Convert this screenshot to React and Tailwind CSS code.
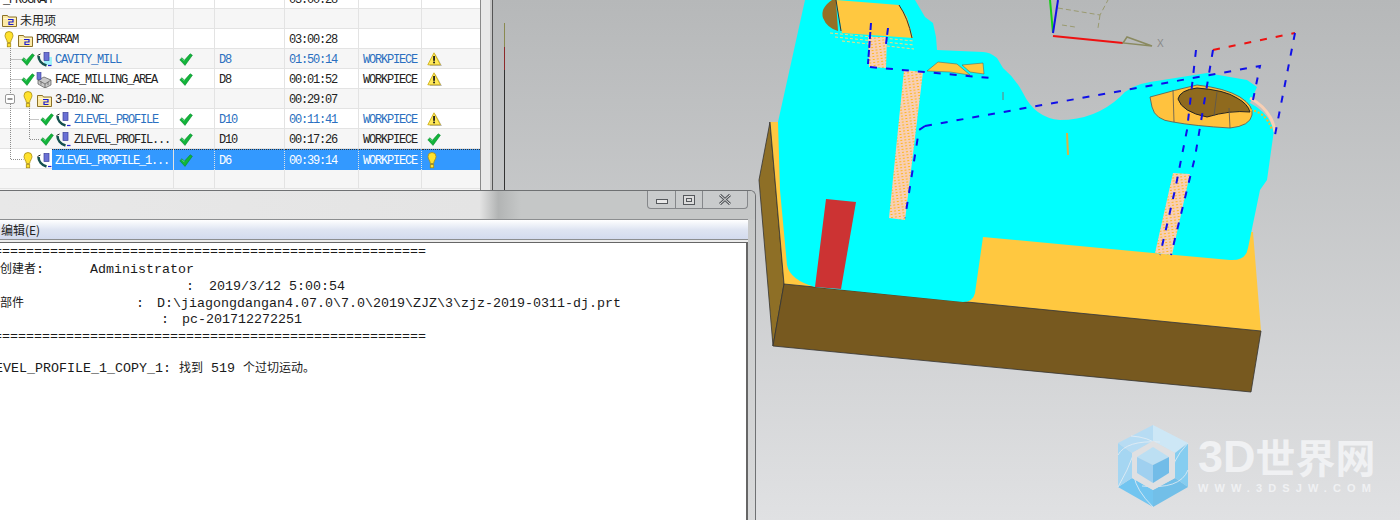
import React from 'react';

const rows = [
  { name: '_PROGRAM', level: 'pl-0', icons: [], time: '03:00:28', shade: 'bg-white' },
  { name: '未用项', level: 'pl-px', icons: ['folder'], shade: 'bg-[#f6f6f6]', cjk: true },
  { name: 'PROGRAM', level: 'pl-px', icons: ['bulb', 'folder'], time: '03:00:28', shade: 'bg-white' },
  { name: 'CAVITY_MILL', level: 'pl-5', icons: ['check', 'toolCyan'], ok: true, tool: 'D8', time: '01:50:14', geom: 'WORKPIECE', status: 'warn', blue: true, shade: 'bg-[#f6f6f6]' },
  { name: 'FACE_MILLING_AREA', level: 'pl-5', icons: ['check', 'mill'], ok: true, tool: 'D8', time: '00:01:52', geom: 'WORKPIECE', status: 'warn', shade: 'bg-white' },
  { name: '3-D10.NC', level: 'pl-5', icons: ['bulb', 'folder'], time: '00:29:07', shade: 'bg-[#f6f6f6]' },
  { name: 'ZLEVEL_PROFILE', level: 'pl-[39px]', icons: ['check', 'tool'], ok: true, tool: 'D10', time: '00:11:41', geom: 'WORKPIECE', status: 'warn', blue: true, shade: 'bg-white' },
  { name: 'ZLEVEL_PROFIL...', level: 'pl-[39px]', icons: ['check', 'tool'], ok: true, tool: 'D10', time: '00:17:26', geom: 'WORKPIECE', status: 'check', shade: 'bg-[#f6f6f6]' },
  { name: 'ZLEVEL_PROFILE_1...', level: 'pl-5', icons: ['bulb', 'tool'], ok: true, tool: 'D6', time: '00:39:14', geom: 'WORKPIECE', status: 'bulb', selected: true, shade: 'bg-white' },
  { name: '', level: 'pl-0', icons: [], shade: 'bg-[#f6f6f6]' },
];

const Bulb = () => (
  <svg width="10" height="17" viewBox="0 0 10 17">
    <path d="M1 4.5a4 4 0 0 1 8 0c0 2.5-2 4-2.4 7H3.4C3 8.500 1 7 1 4.500z" fill="#ffe22e" stroke="#a88c10" strokeWidth="0.8" />
    <rect x="3.300" y="12.600" width="3.400" height="3.200" fill="#ffe22e" stroke="#a88c10" strokeWidth="0.8" />
  </svg>
);

const Folder = () => (
  <svg width="15" height="14" viewBox="0 0 15 14">
    <path d="M0.500 2.500h5l1 1.500h8v9.500h-14z" fill="#fdeaa6" stroke="#8b7128" />
    <rect x="1.500" y="5" width="12" height="1" fill="#fff8d8" />
    <path d="M6 6.500h5v2.500H7v2.500h4.500" fill="none" stroke="#1a1ad0" strokeWidth="1.200" />
  </svg>
);

const Check = () => (
  <svg width="14" height="13" viewBox="0 0 14 13">
    <path d="M0.800 6.800L3 4.700l2.400 2.600L11.200 0.800l2.200 1.400-7.400 10.200z" fill="#12b53a" stroke="#0c8a30" strokeWidth="0.600" />
    <path d="M3 5.600l2.400 2.500" stroke="#8ce8a0" strokeWidth="0.700" />
  </svg>
);

const Tool = ({ cyan }) => (
  <svg width="15" height="15" viewBox="0 0 15 15">
    {cyan && <rect x="7" y="5" width="8" height="8" fill="#9ff2fa" />}
    <path d="M1.500 4c0 4 3 8 8 9.500" fill="none" stroke="#14504e" strokeWidth="2.600" />
    <path d="M0.500 3.500l3-1.500" stroke="#222" strokeWidth="1" />
    <rect x="7" y="0.500" width="5" height="8" fill="#6a70d4" stroke="#3a3f9a" strokeWidth="0.700" />
    <path d="M11 13.500h3.500" stroke="#2424d0" strokeWidth="1.200" />
  </svg>
);

const Mill = () => (
  <svg width="16" height="16" viewBox="0 0 16 16">
    <path d="M2 8l6-3 7 3v5l-6 3-7-4z" fill="#c8c8c8" stroke="#555" strokeWidth="0.700" />
    <path d="M2 8l7 4 6-4M9 12v4M5 9.500l0 3M12 10v3" fill="none" stroke="#555" strokeWidth="0.700" />
    <rect x="1" y="0.500" width="4" height="7" fill="#6a70d4" stroke="#3a3f9a" strokeWidth="0.600" />
  </svg>
);

const Warn = () => (
  <svg width="16" height="15" viewBox="0 0 16 15">
    <path d="M8.500 2l6.500 12H2.500z" fill="#bbb" />
    <path d="M7 0.800l6.400 12H0.800z" fill="#ffe95a" stroke="#c9a90a" strokeWidth="0.800" />
    <rect x="6.200" y="4" width="1.700" height="4.800" fill="#111" />
    <rect x="6.200" y="9.600" width="1.700" height="1.700" fill="#111" />
  </svg>
);

const icons = {
  bulb: <Bulb />,
  folder: <Folder />,
  check: <Check />,
  tool: <Tool />,
  toolCyan: <Tool cyan />,
  mill: <Mill />,
  warn: <Warn />,
};

const Row = ({ row }) => {
  const tone = row.selected ? 'text-white' : row.blue ? 'text-[#2a6fc0]' : 'text-[#222]';
  const cell = `h-full flex items-center border-r border-[#e3e3e3] ${row.selected ? 'bg-[#3399ff] border-t border-t-[#333] border-dotted' : ''}`;
  return (
    <div className={`grid grid-cols-[174px_41px_70px_74px_63px_58px] h-5 border-b border-[#e3e3e3] ${row.shade} ${tone}`}>
      <div className={`h-full flex items-center border-r border-[#e3e3e3] ${row.level}`}>
        {row.icons.map((ic, i) => (
          <span key={i} className="w-4 h-full pt-px flex items-center justify-center shrink-0">{icons[ic]}</span>
        ))}
        <span className={`flex-1 h-full flex items-center pt-[2px] pl-[3px] ${row.selected ? 'bg-[#3399ff] border-t border-[#333] border-dotted' : ''} ${row.cjk ? "text-[12px] tracking-normal [font-family:'Noto_Sans_CJK_SC',sans-serif]" : ''}`}>
          {row.name}
        </span>
      </div>
      <div className={`${cell} pt-px pl-[5px]`}>{row.ok && <Check />}</div>
      <div className={`${cell} pt-[2px] pl-1`}>{row.tool}</div>
      <div className={`${cell} pt-[2px] pl-1`}>{row.time}</div>
      <div className={`${cell} pt-[2px] pl-1`}>{row.geom}</div>
      <div className={`${cell} pt-px pl-[5px] border-r-0`}>{row.status && (row.status === 'check' ? <Check /> : icons[row.status])}</div>
    </div>
  );
};

const Model = () => (
  <svg className="absolute left-0 top-0" width="1400" height="520" viewBox="0 0 1400 520">
    <defs>
      <pattern id="hatch" width="4" height="3" patternUnits="userSpaceOnUse" patternTransform="rotate(-8)">
        <rect width="4" height="3" fill="#f8cfb4" />
        <rect width="2" height="1" fill="#ffb820" />
      </pattern>
    </defs>
    <path d="M504.500 23v24" stroke="#8a8a50" />
    <path d="M504.500 47v23" stroke="#8c2a2a" />
    <path d="M504.500 70v120" stroke="#333" />

    <polygon points="770,122 759,180 773,346 784,284" fill="#8e6f26" stroke="#333" strokeWidth="0.800" />
    <polygon points="770,122 782,122 800,230 1253,232 1261,331 784,284" fill="#ffc840" />
    <polygon points="784,284 1261,331 1251,392 773,346" fill="#77591f" stroke="#333" strokeWidth="0.800" />
    <path d="M770 122L784 284" stroke="#333" strokeWidth="0.800" />

    <path
      d="M805 0L778 122L780 190L787 265Q790 280 815 287L963 302Q973 302 975 293L983 237L1153 253L1230 260Q1246 261 1248 248L1260 190L1267 180L1274 130Q1268 112 1250 103L1257 87L1247 80L1207 73L1150 82Q1130 85 1120 97Q1095 120 1060 120Q1035 118 1023 93Q1015 78 1003 68L997 58Q990 52 983 52L937 50L936 37L933 23L925 17L915 0Z"
      fill="#00ffff"
    />

    <polygon points="826,199 856,202 841,289 815,287" fill="#cc3333" />

    <path d="M832 0Q820 8 823 18Q827 28 838 31L836 0Z" fill="#957026" />
    <path d="M836 0L899 5L907 17L913 38L842 33Z" fill="#ffc840" />
    <path d="M836 0L841 31M899 5Q908 18 912 38" fill="none" stroke="#333" strokeWidth="1" />
    <path d="M830 33L914 41M835 37L914 45M842 41L914 49" stroke="#ffd878" strokeDasharray="3 2" />

    <path d="M927 71L938 62L957 64L970 75L950 72Z" fill="#ffc840" stroke="#555" strokeWidth="0.500" />
    <path d="M962 65L983 63L984 74L970 72Z" fill="#ffc840" stroke="#555" strokeWidth="0.500" />

    <polygon points="868,37 887,37 886,68 869,67" fill="url(#hatch)" />
    <polygon points="904,70 923,72 905,220 889,218" fill="url(#hatch)" />
    <polygon points="1173,173 1190,174 1172,255 1155,253" fill="url(#hatch)" />

    <path d="M1150 97Q1175 90 1197 85Q1225 88 1240 97Q1254 106 1252 115Q1250 126 1230 128Q1195 126 1173 122Q1155 120 1152 107Z" fill="#ffc23e" stroke="#555" strokeWidth="0.800" />
    <path d="M1178 99Q1180 90 1197 88Q1225 90 1237 98Q1248 104 1250 112Q1230 110 1207 117Q1182 112 1178 99Z" fill="#8f6a1e" stroke="#222" strokeWidth="1" />
    <path d="M1173 90L1174 122M1230 128L1229 108M1214 116L1217 92" fill="none" stroke="#555" strokeWidth="0.800" />
    <path d="M1250 98Q1272 110 1275 132" fill="none" stroke="#f8cfb4" strokeWidth="3" />
    <path d="M1250 110Q1266 112 1272 130" fill="none" stroke="#ffb820" strokeWidth="2" strokeDasharray="2 2" />

    <g fill="none" strokeWidth="2" strokeDasharray="7 9">
      <path d="M1213 50L1295 33" stroke="#ee1111" />
      <path d="M1295 33L1275 135M1196 50L1187 130L1175 190L1160 255M1213 50L1195 157L1171 255" stroke="#1010e8" />
      <path d="M925 126L1260 66L1253 100M925 126L919 130L905 218" stroke="#1010e8" />
      <path d="M870 67L990 78" stroke="#1010e8" />
      <path d="M871 23L868 64M888 28L886 44" stroke="#1010e8" strokeDasharray="7 2" />
    </g>

    <path d="M1067 133L1068 155" stroke="#e0b040" strokeWidth="2" />
    <path d="M1003 92L1003 100" stroke="#777" />

    <path d="M1050 0L1053 33" stroke="#18d018" strokeWidth="2" />
    <path d="M1058 0L1053 33" stroke="#1010e8" strokeWidth="2" />
    <path d="M1053 36L1123 43" stroke="#ee1111" strokeWidth="2" />
    <path d="M1123 43L1127 37L1152 46Z" fill="none" stroke="#8a8a60" strokeWidth="1.500" />
    <path d="M1058 8L1100 15L1108 0M1100 15L1098 28M1062 25L1075 27" fill="none" stroke="#9a9a70" strokeDasharray="5 3" />
    <text x="1157" y="47" className="text-[10px] [font-family:'Liberation_Sans',sans-serif]" fill="#888">X</text>
  </svg>
);

const Logo = () => (
  <div className="absolute left-[1117px] top-[424px] flex items-start gap-[9px]">
    <svg width="72" height="84" viewBox="1117 424 72 84">
      <polygon points="1153,425 1188,443 1175,453 1153,441" fill="#cde7f6" />
      <polygon points="1188,443 1188,487 1175,478 1175,453" fill="#85cdf0" />
      <polygon points="1188,487 1153,507 1153,490 1175,478" fill="#72bfe8" />
      <polygon points="1153,507 1118,487 1132,478 1153,490" fill="#72c5f0" />
      <polygon points="1118,487 1118,443 1132,453 1132,478" fill="#a5d6f2" />
      <polygon points="1118,443 1153,425 1153,441 1132,453" fill="#b7dcf3" />
      <path d="M1131 436Q1165 438 1172 468M1188 443Q1170 462 1172 478M1188 470Q1180 490 1142 486M1153 507Q1136 490 1134 476M1118 487Q1128 470 1134 453M1118 455Q1126 440 1160 442" fill="none" stroke="#e6eef4" strokeWidth="0.800" />
      <polygon points="1153,441 1175,453 1175,478 1153,490 1132,478 1132,453" fill="#dfe0e2" />
      <polygon points="1153,447 1169,457 1153,465 1137,457" fill="#bcdff3" />
      <polygon points="1137,457 1153,465 1153,483 1137,473" fill="#9fd0f0" />
      <polygon points="1169,457 1153,465 1153,483 1169,473" fill="#72bce8" />
    </svg>
    <div className="flex flex-col pt-[5px] text-[#f0f1f3]">
      <div className="flex items-center h-[54px] font-bold leading-none">
        <span className="text-[45px] [font-family:'Liberation_Sans',sans-serif]">3D</span>
        <span className="text-[40px] [font-family:'Noto_Sans_CJK_SC',sans-serif]">世界网</span>
      </div>
      <div className="text-[11px] leading-none font-bold tracking-[6.100px] [font-family:'Liberation_Sans',sans-serif]">WWW.3DSJW.COM</div>
    </div>
  </div>
);

const cjk = "text-[12px] leading-none [font-family:'Noto_Sans_CJK_SC',sans-serif]";
const line = 'h-[16.700px]';
const rule = '======================================================';

const Dialog = () => (
  <div className="absolute left-0 top-[190px] w-[756px] h-[330px] flex flex-col border-t border-r border-[#6f7173] rounded-tr-[6px] bg-gradient-to-b from-[#c5c7c7] to-[#d9dadb] pr-[7px] overflow-hidden">
    <div className="h-[28px] shrink-0 flex justify-end items-start -mr-[7px] pr-[7px] bg-[linear-gradient(90deg,#e8e8e8_0%,#e4e4e4_63.500%,#b2b4b4_66%,#bcbebe_67.500%,#c5c7c7_69%,#c5c7c7_100%)]">
      <div className="flex h-[18px] w-[101px] border-x border-b border-[#85878a] rounded-b-[4px] bg-[#c9cbcc]">
        <div className="w-[28px] border-r border-[#85878a] flex items-center justify-center">
          <div className="w-[12px] h-[5px] mt-[4px] border border-[#55585c] bg-[#e8e8e8]" />
        </div>
        <div className="w-[27px] border-r border-[#85878a] flex items-center justify-center">
          <div className="w-[12px] h-[10px] border border-[#55585c] flex items-center justify-center bg-[#dcdcdc]">
            <div className="w-[6px] h-[4px] border border-[#55585c]" />
          </div>
        </div>
        <div className="flex-1 flex items-center justify-center">
          <svg width="14" height="11" viewBox="0 0 14 11">
            <path d="M2 1l10 9M12 1L2 10" stroke="#55585c" strokeWidth="3" />
            <path d="M2 1l10 9M12 1L2 10" stroke="#e4e4e4" strokeWidth="1" />
          </svg>
        </div>
      </div>
    </div>
    <div className="h-[21px] shrink-0 border-t border-[#8c8e90] border-b bg-gradient-to-b from-white via-[#dfe5f2] to-[#d3dbee] flex items-center pl-px text-[12px] text-[#222] [font-family:'Noto_Sans_CJK_SC',sans-serif]">
      编辑(E)
    </div>
    <div className="h-[2px] shrink-0 bg-[#ececec]" />
    <div className="flex-1 bg-white border-t border-r-2 border-[#666] overflow-hidden pt-[1px] text-[13.330px] leading-[16.700px] text-[#1a1a1a] whitespace-pre [font-family:'Liberation_Mono',monospace]">
      <div className="h-[18.200px] -ml-[6px]">{rule}</div>
      <div className={line}><span className={cjk}>创建者</span>:<span className="ml-[46px]">Administrator</span></div>
      <div className={`${line} ml-[186px]`}>:<span className="ml-[15px]">2019/3/12 5:00:54</span></div>
      <div className={line}><span className={cjk}>部件</span><span className="ml-[112px]">:</span><span className="ml-[13px]">D:\jiagongdangan4.07.0\7.0\2019\ZJZ\3\zjz-2019-0311-dj.prt</span></div>
      <div className={`${line} ml-[161px]`}>:<span className="ml-[13px]">pc-201712272251</span></div>
      <div className={`${line} -ml-[6px]`}>{rule}</div>
      <div className="h-[15.200px]">&nbsp;</div>
      <div className={`${line} -ml-[21px]`}>ZLEVEL_PROFILE_1_COPY_1: <span className={cjk}>找到</span> 519 <span className={cjk}>个过切运动。</span></div>
    </div>
  </div>
);

const App = () => (
  <div className="relative w-[1400px] h-[520px] overflow-hidden bg-gradient-to-b from-[#b6b8b9] to-[#e0e1e3]">
    <Model />
    <Logo />
    <div className="relative w-[493px] h-[190px] flex border-r border-[#555]">
      <div className="relative w-[481px] h-full overflow-hidden bg-[#f6f6f6] border-r border-[#8a8a8a] text-[12px] tracking-[-1.200px] [font-family:'Liberation_Mono',monospace]">
        <div className="-mt-[11px]">
          {rows.map((row, i) => <Row key={i} row={row} />)}
        </div>
        <svg className="absolute left-0 top-0" width="60" height="170" viewBox="0 0 60 170">
          <g fill="none" stroke="#8c8c8c" strokeDasharray="1 1">
            <path d="M10.500 48v111.500h13M10.500 59.500h11M10.500 79.500h11M29.500 108v31.500h10M29.500 119.500h10" />
          </g>
          <rect x="5.500" y="94.500" width="9" height="9" rx="1.500" fill="#fff" stroke="#999" />
          <path d="M7.500 99h5" stroke="#333" />
        </svg>
      </div>
      <div className="flex-1 bg-[#e9e9e9] border-r-2 border-[#c6c6c6]" />
    </div>
    <Dialog />
  </div>
);

export default App;
